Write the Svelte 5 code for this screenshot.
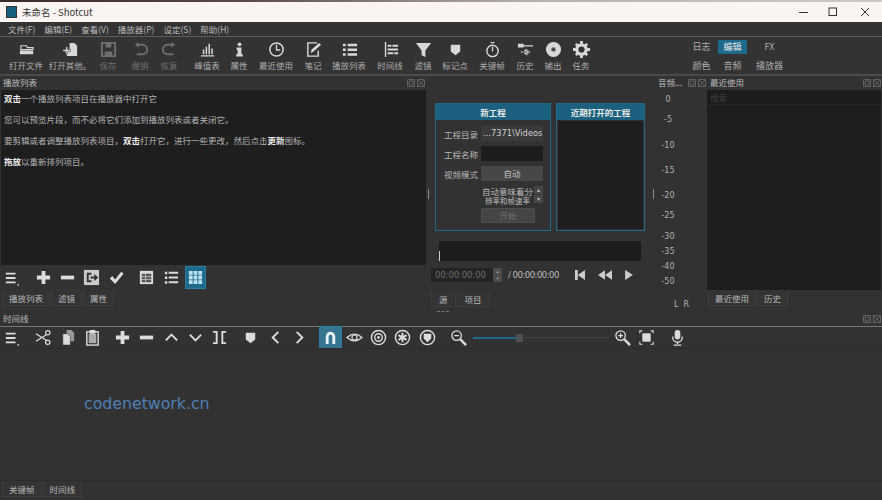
<script>
  const I = {
    open: '<path d="M3 5h6l1 2h6v2H3z" fill="none" stroke="currentColor" stroke-width="1.2"/><rect x="2" y="10" width="14" height="4" fill="currentColor"/>',
    openOther: '<path d="M8 2h5l3 3v11H5v-5h3z" fill="currentColor"/><path d="M1 9h3V6h2v3h3v2H6v3H4v-3H1z" fill="currentColor" stroke="#333" stroke-width=".5"/>',
    save: '<path d="M2 2h14v14H2z" fill="none" stroke="currentColor" stroke-width="2"/><path d="M6 2h6v5H6zM5 11h8v5H5z" fill="currentColor"/>',
    undo: '<path d="M6 4h5a4.5 4.5 0 0 1 0 10H5" fill="none" stroke="currentColor" stroke-width="2"/><path d="M7 1v6L3 4z" fill="currentColor"/>',
    redo: '<path d="M12 4H7a4.5 4.5 0 0 0 0 10h6" fill="none" stroke="currentColor" stroke-width="2"/><path d="M11 1v6l4-3z" fill="currentColor"/>',
    peak: '<path d="M2 15h14v1.5H2zM4 9h1.6v5H4zM7 6h1.6v8H7zM10 3h1.6v11H10zM13 8h1.6v6H13z" fill="currentColor"/>',
    info: '<circle cx="9" cy="3.5" r="2" fill="currentColor"/><path d="M6 7h5v7h1.5v2.5h-7V14H7V9.500H6z" fill="currentColor"/>',
    clock: '<circle cx="9" cy="9" r="7" fill="none" stroke="currentColor" stroke-width="1.6"/><path d="M9 4v5.500h4" fill="none" stroke="currentColor" stroke-width="1.400"/>',
    note: '<path d="M14 10v6H3V2h10" fill="none" stroke="currentColor" stroke-width="1.500"/><path d="M6 13l1-4 8-7 2 2-8 7z" fill="currentColor"/>',
    plist: '<path d="M2 3h3v2.500H2zM7 3h10v2.500H7zM2 8h3v2.500H2zM7 8h10v2.500H7zM2 13h3v2.500H2zM7 13h10v2.500H7z" fill="currentColor"/>',
    tline: '<path d="M3 1h1.500v16H3zM6 4h4v2H6zM11 4h6v2h-6zM6 8h11v2H6zM6 12h6v2H6zM13 12h4v2h-4z" fill="currentColor"/>',
    filter: '<path d="M1 2h16l-6 8v7l-4-2v-5z" fill="currentColor"/>',
    marker: '<path d="M4 4h10v7l-5 4-5-4z" fill="currentColor"/>',
    stopwatch: '<circle cx="9" cy="10.500" r="6" fill="none" stroke="currentColor" stroke-width="1.500"/><path d="M7 1h4v1.500H7zM8.300 6h1.400v5H8.300z" fill="currentColor"/>',
    history: '<path d="M1 3h6v4H1zM7 4.500h10v1.200H7zM4 11h10v1.200H4zM10 8l-4 3.600 4 3.600z" fill="currentColor"/><path d="M10 9h2v6h-2z" fill="currentColor" opacity=".6"/>',
    disc: '<circle cx="9" cy="9" r="8" fill="currentColor"/><circle cx="9" cy="9" r="2.500" fill="#666"/><circle cx="9" cy="9" r="1" fill="#222"/>',
    gear: '<circle cx="9" cy="9" r="5" fill="none" stroke="currentColor" stroke-width="3.400"/><path d="M7.500 0h3v3h-3zM7.500 15h3v3h-3zM0 7.500h3v3H0zM15 7.500h3v3h-3zM2 4l2-2 2 2-2 2zM12 4l2-2 2 2-2 2zM2 14l2-2 2 2-2 2zM12 14l2-2 2 2-2 2z" fill="currentColor"/>',
    menu: '<path d="M2 3h11v2H2zM2 8h11v2H2zM2 13h11v2H2zM15 16h2v1.500h-2z" fill="currentColor"/>',
    plus: '<path d="M7 2h4v5h5v4h-5v5H7v-5H2V7h5z" fill="currentColor"/>',
    minus: '<path d="M2 7h14v4H2z" fill="currentColor"/>',
    update: '<rect x="1" y="1" width="16" height="16" fill="#ccc"/><path d="M4 4h5v2H6v6h3v2H4zM8 8h4V5l4 4-4 4v-3H8z" fill="#333"/>',
    check: '<path d="M2 10l2.500-2.500L7.500 11 14 3l2.500 2L7.500 16z" fill="currentColor"/>',
    table: '<rect x="2" y="2" width="14" height="14" fill="currentColor"/><path d="M4 5h10v9H4z" fill="#555"/><path d="M8 5v9M4 8h10M4 11h10" stroke="#ccc" stroke-width=".8"/>',
    list2: '<path d="M2 3h2.500v2.500H2zM6 3h10v2H6zM2 8h2.500v2.500H2zM6 8h10v2H6zM2 13h2.500v2.500H2zM6 13h10v2H6z" fill="currentColor"/>',
    grid: '<path d="M2 2h4v4H2zM7 2h4v4H7zM12 2h4v4h-4zM2 7h4v4H2zM7 7h4v4H7zM12 7h4v4h-4zM2 12h4v4H2zM7 12h4v4H7zM12 12h4v4h-4z" fill="#bfe3f2"/>',
    cut: '<circle cx="13.500" cy="4" r="2.300" fill="none" stroke="currentColor" stroke-width="1.300"/><circle cx="13.500" cy="14" r="2.300" fill="none" stroke="currentColor" stroke-width="1.300"/><path d="M1 5l11 7M1 13l11-7" stroke="currentColor" stroke-width="1.300"/>',
    copy: '<path d="M7 1h5l3 3v9H7z" fill="#999"/><path d="M3 5h5l3 3v9H3z" fill="currentColor" stroke="#333" stroke-width=".6"/>',
    paste: '<rect x="3" y="3" width="12" height="14" fill="none" stroke="currentColor" stroke-width="1.500"/><rect x="5" y="5" width="8" height="10" fill="#aaa"/><path d="M6 1h6v4H6z" fill="currentColor"/>',
    up: '<path d="M3 12l6-6 6 6" fill="none" stroke="currentColor" stroke-width="2"/>',
    down: '<path d="M3 6l6 6 6-6" fill="none" stroke="currentColor" stroke-width="2"/>',
    split: '<path d="M2 2h5v14H2v-2h3V4H2zM16 2h-5v14h5v-2h-3V4h3z" fill="currentColor"/>',
    prev: '<path d="M12 3L6 9l6 6" fill="none" stroke="currentColor" stroke-width="2"/>',
    next: '<path d="M6 3l6 6-6 6" fill="none" stroke="currentColor" stroke-width="2"/>',
    snap: '<path d="M4 16V8a5 5 0 0 1 10 0v8h-3V8a2 2 0 0 0-4 0v8z" fill="#eaf4f8"/>',
    eye: '<path d="M1 9q8-7 16 0-8 7-16 0z" fill="none" stroke="currentColor" stroke-width="1.300"/><circle cx="9" cy="9" r="2.700" fill="none" stroke="currentColor" stroke-width="1.200"/>',
    ripple: '<circle cx="9" cy="9" r="7.500" fill="none" stroke="currentColor" stroke-width="1.500"/><circle cx="9" cy="9" r="4" fill="none" stroke="currentColor" stroke-width="1.500"/><circle cx="9" cy="9" r="1.500" fill="currentColor"/>',
    rippleAll: '<circle cx="9" cy="9" r="7.500" fill="none" stroke="currentColor" stroke-width="1.500"/><path d="M9 4v10M4.700 6.500l8.600 5M13.300 6.500l-8.600 5" stroke="currentColor" stroke-width="2"/>',
    rippleMark: '<circle cx="9" cy="9" r="7.500" fill="none" stroke="currentColor" stroke-width="1.500"/><path d="M5 5h8v5l-4 4-4-4z" fill="currentColor"/>',
    zoomOut: '<circle cx="7" cy="7" r="5" fill="none" stroke="currentColor" stroke-width="1.400"/><path d="M4.500 7h5" stroke="currentColor" stroke-width="1.400"/><path d="M11 11l6 6" stroke="currentColor" stroke-width="2.600"/>',
    zoomIn: '<circle cx="7" cy="7" r="5" fill="none" stroke="currentColor" stroke-width="1.400"/><path d="M4.500 7h5M7 4.500v5" stroke="currentColor" stroke-width="1.400"/><path d="M11 11l6 6" stroke="currentColor" stroke-width="2.600"/>',
    fit: '<rect x="4" y="4" width="10" height="10" fill="currentColor"/><path d="M1 4V1h3M14 1h3v3M17 14v3h-3M4 17H1v-3" fill="none" stroke="currentColor" stroke-width="1.300"/>',
    mic: '<rect x="6" y="1" width="6" height="10" rx="3" fill="currentColor"/><path d="M4 8v1a5 5 0 0 0 10 0V8M9 14v2M5 17h8" fill="none" stroke="currentColor" stroke-width="1.400"/>'
  };

  const menus = ['文件(F)', '编辑(E)', '查看(V)', '播放器(P)', '设定(S)', '帮助(H)'];
  const tools = [
    ['open', '打开文件', 52], ['openOther', '打开其他。', 36], ['save', '保存', 40, 1], ['undo', '撤销', 24, 1],
    ['redo', '恢复', 34, 1], ['peak', '峰值表', 42], ['info', '属性', 22], ['clock', '最近使用', 52],
    ['note', '笔记', 22], ['plist', '播放列表', 50], ['tline', '时间线', 32], ['filter', '滤镜', 34],
    ['marker', '标记点', 30], ['stopwatch', '关键帧', 44], ['history', '历史', 22], ['disc', '输出', 34], ['gear', '任务', 22]
  ];
  const playlistBtns = [['menu', 24], ['plus', 38], ['minus', 10], ['update', 38], ['check', 12], ['table', 48], ['list2', 2], ['grid', 19]];
  const timelineBtns = [
    ['menu', 24], ['cut', 38], ['copy', 12], ['paste', 37], ['plus', 23], ['minus', 25], ['up', 24], ['down', 24],
    ['split', 25], ['marker', 36], ['prev', 14], ['next', 34], ['snap', 21, 'on'], ['eye', 26], ['ripple', 23], ['rippleAll', 25], ['rippleMark', 24]
  ];
  const scale = [['0', 99], ['-5', 119], ['-10', 145], ['-15', 170], ['-20', 195], ['-25', 215], ['-30', 236], ['-35', 251], ['-40', 266], ['-50', 281]];
</script>

{#snippet dock()}
  <svg class="dockbtns" viewBox="0 0 18 8" width="18" height="8"><path d="M.5.500h7v7h-7zM2 2h4v4H2z" fill="none" stroke="#6c6c6c" stroke-width=".8"/><path d="M10.500.500h7v7h-7zM11 1l6 6M17 1l-6 6" fill="none" stroke="#6c6c6c" stroke-width=".8"/></svg>
{/snippet}

{#snippet ic(name, size = 18)}
  <svg class="ic" viewBox="0 0 18 18" width={size} height={size}>{@html I[name]}</svg>
{/snippet}

<div class="win">
  <div class="wall"></div>
  <header class="title">
    <span class="logo"></span>
    <span class="ttext">未命名 - Shotcut</span>
    <span class="winbtns">
      <svg viewBox="0 0 10 10" width="10" height="10"><path d="M0 5.500h9" stroke="#333"/></svg>
      <svg viewBox="0 0 10 10" width="10" height="10"><rect x="1" y="1" width="7.500" height="7.500" fill="none" stroke="#333"/></svg>
      <svg viewBox="0 0 10 10" width="10" height="10"><path d="M1 1l8 8M9 1l-8 8" stroke="#333"/></svg>
    </span>
  </header>

  <nav class="menu">{#each menus as m}<span>{m}</span>{/each}</nav>

  <div class="toolbar">
    {#each tools as [icon, label, w, dis]}
      <div class="tool" class:dis style="width:{w}px">
        {@render ic(icon, 17)}
        <span>{label}</span>
      </div>
    {/each}
    <div class="modes">
      <span>日志</span><span class="sel">编辑</span><span>FX</span>
      <span>颜色</span><span>音频</span><span>播放器</span>
    </div>
  </div>

  <div class="main">
    <section class="playlist">
      <div class="dtitle">播放列表{@render dock()}</div>
      <div class="help">
        <p><b>双击</b>一个播放列表项目在播放器中打开它</p>
        <p>您可以预览片段，而不必将它们添加到播放列表或者关闭它。</p>
        <p>要剪辑或者调整播放列表项目，<b>双击</b>打开它，进行一些更改，然后点击<b>更新</b>图标。</p>
        <p><b>拖放</b>以重新排列项目。</p>
      </div>
      <div class="btnrow">
        {#each playlistBtns as [icon, w]}
          <span class="slot" class:on={icon === 'grid'} style="width:{w}px">{@render ic(icon, icon === 'menu' ? 16 : 17)}</span>
        {/each}
      </div>
      <div class="tabs">
        <span class="tab">播放列表</span><span class="tab">滤镜</span><span class="tab">属性</span>
      </div>
    </section>

    <section class="center">
      <div class="welcome">
        <div class="card new">
          <h4>新工程</h4>
          <div class="form">
            <label>工程目录</label><div class="field">...7371\Videos</div>
            <label>工程名称</label><div class="field dark"></div>
            <label>视频模式</label><div class="btn">自动</div>
            <div class="auto">
              <div class="autotext"><span>自动意味着分</span><small>辨率和帧速率</small></div>
              <div class="spin"><i>▴</i><i>▾</i></div>
            </div>
            <div class="btn start">开始</div>
          </div>
        </div>
        <div class="card recentp">
          <h4>近期打开的工程</h4>
          <div class="rlist"></div>
        </div>
      </div>
      <div class="scrub"><i></i></div>
      <div class="transport">
        <div class="tc">00:00:00:00</div>
        <div class="tcspin"><i>▴</i><i>▾</i></div>
        <div class="dur">/ 00:00:00:00</div>
        <svg class="tbtn" viewBox="0 0 9 9" width="10" height="10"><path d="M0 0h2.500v9H0zM9 0v9L2.500 4.500z" fill="#ccc"/></svg>
        <svg class="tbtn" viewBox="0 0 13 9" width="14" height="10"><path d="M6.500 0v9L0 4.500zM13 0v9L6.500 4.500z" fill="#ccc"/></svg>
        <svg class="tbtn" viewBox="0 0 7 9" width="8" height="10"><path d="M0 0l7 4.500L0 9z" fill="#ccc"/></svg>
      </div>
      <div class="tabs ctabs"><span class="tab">源</span><span class="tab">项目</span></div>
      <div class="grip"></div>
    </section>

    <section class="meter">
      <div class="dtitle">音频...{@render dock()}</div>
      {#each scale as [t, y]}
        <span class="tick" style="top:{y - 81}px">{t}</span>
      {/each}
      <span class="lr">L&nbsp;&nbsp;R</span>
    </section>

    <section class="recent">
      <div class="dtitle">最近使用{@render dock()}</div>
      <div class="rbox"><div class="search">搜索</div></div>
      <div class="tabs"><span class="tab">最近使用</span><span class="tab">历史</span></div>
    </section>
  </div>

  <section class="timeline">
    <div class="dtitle tl">时间线{@render dock()}</div>
    <div class="tltools">
      {#each timelineBtns as [icon, w, on]}
        <span class="slot" class:on={on === 'on'} style="width:{w}px">{@render ic(icon, icon === 'menu' ? 16 : 17)}</span>
      {/each}
      <span class="zoomout">{@render ic('zoomOut', 17)}</span>
      <div class="slider"><b></b><u></u></div>
      <span class="zoomin">{@render ic('zoomIn', 17)}</span>
      <span class="fit">{@render ic('fit', 15)}</span>
      <span class="mic">{@render ic('mic', 17)}</span>
    </div>
    <div class="tlbody"><span class="wm">codenetwork.cn</span></div>
    <div class="tabs tltabs"><span class="tab">关键帧</span><span class="tab">时间线</span></div>
  </section>
</div>

<style>
  :global(body) { margin: 0; background: #323232; }
  .win {
    position: relative; width: 882px; height: 500px; overflow: hidden; display: flex; flex-direction: column;
    background: #323232; color: #bcbcbc;
    font: 8.500px "Noto Sans CJK SC", "Liberation Sans", sans-serif;
  }
  .wall { height: 2px; flex: none; background: linear-gradient(90deg, #3a2a28 0, #5a4a46 28%, #b8b0ac 60%, #cfcac8 100%); }
  .title { height: 20px; flex: none; display: flex; align-items: center; background: #faf4f2; color: #333; padding-left: 6px; }
  .logo { width: 11px; height: 12px; background: #14607f; border: 1px solid #333; box-sizing: border-box; margin-right: 5px; }
  .ttext { font-size: 9.500px; }
  .winbtns { margin-left: auto; display: flex; gap: 20px; padding-right: 12px; }
  .winbtns svg:nth-child(1) { margin-right: -1px; }
  .winbtns svg:nth-child(2) { margin-right: 2px; }
  .menu { height: 14px; flex: none; display: flex; align-items: center; gap: 9px; padding-left: 8px; background: #333; color: #bcbcbc; }
  .toolbar {
    position: relative; height: 37px; flex: none; display: flex; background: #333;
    border-top: 1px solid #5c5c5c; border-bottom: 2px solid #4a4a4a;
  }
  .tool { display: flex; flex-direction: column; align-items: center; justify-content: flex-start; color: #d8d8d8; padding-top: 4px; white-space: nowrap; flex: none; }
  .tool span { color: #aeaeae; margin-top: 1px; line-height: 12px; }
  .tool.dis, .tool.dis span { color: #6e6e6e; }
  .ic { display: block; flex: none; }
  .modes { margin-left: 94px; display: grid; grid-template-columns: 31px 31px 43px; row-gap: 5px; justify-items: center; align-content: start; padding-top: 3px; font-size: 9px; color: #aeaeae; height: fit-content; }
  .modes span { line-height: 14px; padding: 0 3px; }
  .modes .sel { background: #1e6a8c; color: #e8e8e8; padding: 0 5px; }
  .main { height: 235px; flex: none; display: flex; }
  .dtitle { position: relative; height: 14px; line-height: 13px; padding-left: 3px; flex: none; color: #bcbcbc; }
  .dockbtns { position: absolute; right: 1px; top: 3px; }
  .playlist { width: 426px; flex: none; display: flex; flex-direction: column; }
  .help { height: 175px; flex: none; background: #1e1e1e; margin-left: 1px; padding: 2px 3px; box-sizing: border-box; color: #b4b4b4; }
  .help p { margin: 0 0 9px; line-height: 12px; white-space: nowrap; }
  .help b { color: #ececec; }
  .btnrow, .tltools { display: flex; align-items: center; flex: none; color: #dcdcdc; }
  .btnrow { height: 25px; }
  .slot { display: flex; justify-content: center; align-items: center; flex: none; height: 21px; }
  .slot.on { background: #1e6a8c; outline: 1px solid #2b7ea3; }
  .btnrow .slot.on { margin-left: 14px; }
  .tabs { display: flex; gap: 1px; height: 16px; padding-left: 2px; flex: none; }
  .tab { display: flex; align-items: center; padding: 0 6px; border: 1px solid #3c3c3c; border-top: none; background: #343434; color: #b8b8b8; line-height: 14px; }
  .center { width: 229px; flex: none; position: relative; display: flex; flex-direction: column; }
  .center::before, .center::after { content: ""; position: absolute; top: 113px; width: 1px; height: 10px; background: #8a8a8a; }
  .center::before { left: 2px; }
  .center::after { right: 1px; }
  .welcome { display: flex; gap: 5px; padding: 27px 0 0 9px; }
  .card { height: 128px; box-sizing: border-box; border: 1px solid #1f6a8a; display: flex; flex-direction: column; }
  .card.new { width: 116px; }
  .card.recentp { width: 89px; }
  .card h4 { margin: 0; height: 16px; line-height: 16px; flex: none; background: #1b617f; color: #e8e8e8; text-align: center; font-size: 8.500px; font-weight: 700; }
  .rlist { flex: 1; background: #1e1e1e; margin: 1px; }
  .form { display: grid; grid-template-columns: 37px 62px; row-gap: 5px; padding: 6px 0 0 8px; align-items: center; }
  .form label { color: #b8b8b8; white-space: nowrap; }
  .field { height: 15px; line-height: 15px; background: #3a3a3a; font: 8.300px/15px "DejaVu Sans", "Liberation Sans", sans-serif; color: #cfcfcf; padding-left: 2px; box-sizing: border-box; white-space: nowrap; }
  .field.dark { background: #1d1d1d; }
  .btn { height: 15px; line-height: 15px; text-align: center; background: #474747; color: #c0c0c0; }
  .auto { grid-column: 2; display: flex; height: 19px; }
  .autotext { width: 53px; display: flex; flex-direction: column; text-align: center; white-space: nowrap; }
  .autotext span { line-height: 10px; height: 10px; }
  .autotext small { font-size: 7.500px; line-height: 9px; height: 9px; }
  .spin { width: 9px; display: flex; flex-direction: column; gap: 1px; }
  .spin i { height: 8px; background: #474747; font: 6px/8px "DejaVu Sans", sans-serif; text-align: center; }
  .form .start { grid-column: 2; width: 54px; background: #454545; color: #707070; border: 1px solid #4e4e4e; box-sizing: border-box; line-height: 13px; margin-top: -2px; }
  .scrub { margin: 10px 0 0 13px; width: 202px; height: 20px; background: #1d1d1d; position: relative; flex: none; }
  .scrub i { position: absolute; left: 0; bottom: 0; width: 1px; height: 10px; background: #ccc; }
  .transport { display: flex; align-items: center; height: 14px; margin: 7px 0 0 5px; flex: none; }
  .tc { width: 62px; height: 14px; line-height: 14px; box-sizing: border-box; padding-left: 4px; background: #242424; color: #6e6e6e; font: 8.500px/14px "DejaVu Sans", sans-serif; letter-spacing: -.1px; }
  .tcspin { width: 9px; height: 14px; background: #4c4c4c; display: flex; flex-direction: column; }
  .tcspin i { height: 7px; font: 5px/7px "DejaVu Sans", sans-serif; text-align: center; color: #999; }
  .dur { width: 67px; margin-left: 6px; font: 8.500px "DejaVu Sans", sans-serif; letter-spacing: -.5px; color: #bcbcbc; white-space: nowrap; }
  .tbtn { flex: none; margin-right: 13px; }
  .ctabs { margin-top: 9px; padding-left: 5px; }
  .ctabs .tab:first-child { padding: 0 7px; }
  .ctabs .tab:last-child { padding: 0 7px; }
  .grip { width: 12px; height: 0; border-top: 1px dashed #777; margin: 4px 0 0 11px; flex: none; }
  .meter { width: 52px; flex: none; position: relative; }
  .tick { position: absolute; left: 0; width: 26px; text-align: center; font: 8px/12px "DejaVu Sans", sans-serif; color: #b0b0b0; }
  .lr { position: absolute; left: 19px; top: 224px; font: 8px "DejaVu Sans", sans-serif; color: #b4b4b4; }
  .recent { flex: 1; display: flex; flex-direction: column; min-width: 0; }
  .rbox { height: 200px; flex: none; background: #1e1e1e; margin-right: 1px; }
  .search { height: 14px; line-height: 14px; padding-left: 3px; color: #3c3c3c; border-bottom: 1px solid #262626; background: #1c1c1c; }
  .recent .tabs { padding-left: 1px; }
  .timeline { flex: 1; display: flex; flex-direction: column; min-height: 0; }
  .dtitle.tl { margin-top: 1px; border-bottom: 1px solid #777; height: 14px; }
  .tltools { height: 21px; position: relative; }
  .tltools .slot.on { background: #35758f; margin-left: 4px; }
  .zoomout { margin-left: 11px; }
  .slider { position: relative; width: 137px; height: 10px; margin-left: 6px; flex: none; }
  .slider u { position: absolute; left: 0; right: 0; top: 4px; height: 1px; background: #3f3f3f; }
  .slider b { position: absolute; left: 0; width: 43px; top: 4px; height: 2px; background: #1e6a8c; z-index: 1; }
  .slider b::after { content: ""; position: absolute; left: 43px; top: -3px; width: 7px; height: 8px; background: #4d5055; }
  .zoomin { margin-left: 4px; }
  .fit { margin-left: 8px; }
  .mic { margin-left: 15px; }
  .tlbody { position: relative; flex: 1; border-top: 1px solid #2c2c2c; }
  .wm { position: absolute; left: 84px; top: 45px; font: 15.750px/20px "DejaVu Sans", sans-serif; color: #4f7fb6; }
  .tltabs { height: 16px; margin-bottom: 3px; border-top: 1px solid #2c2c2c; }
</style>
